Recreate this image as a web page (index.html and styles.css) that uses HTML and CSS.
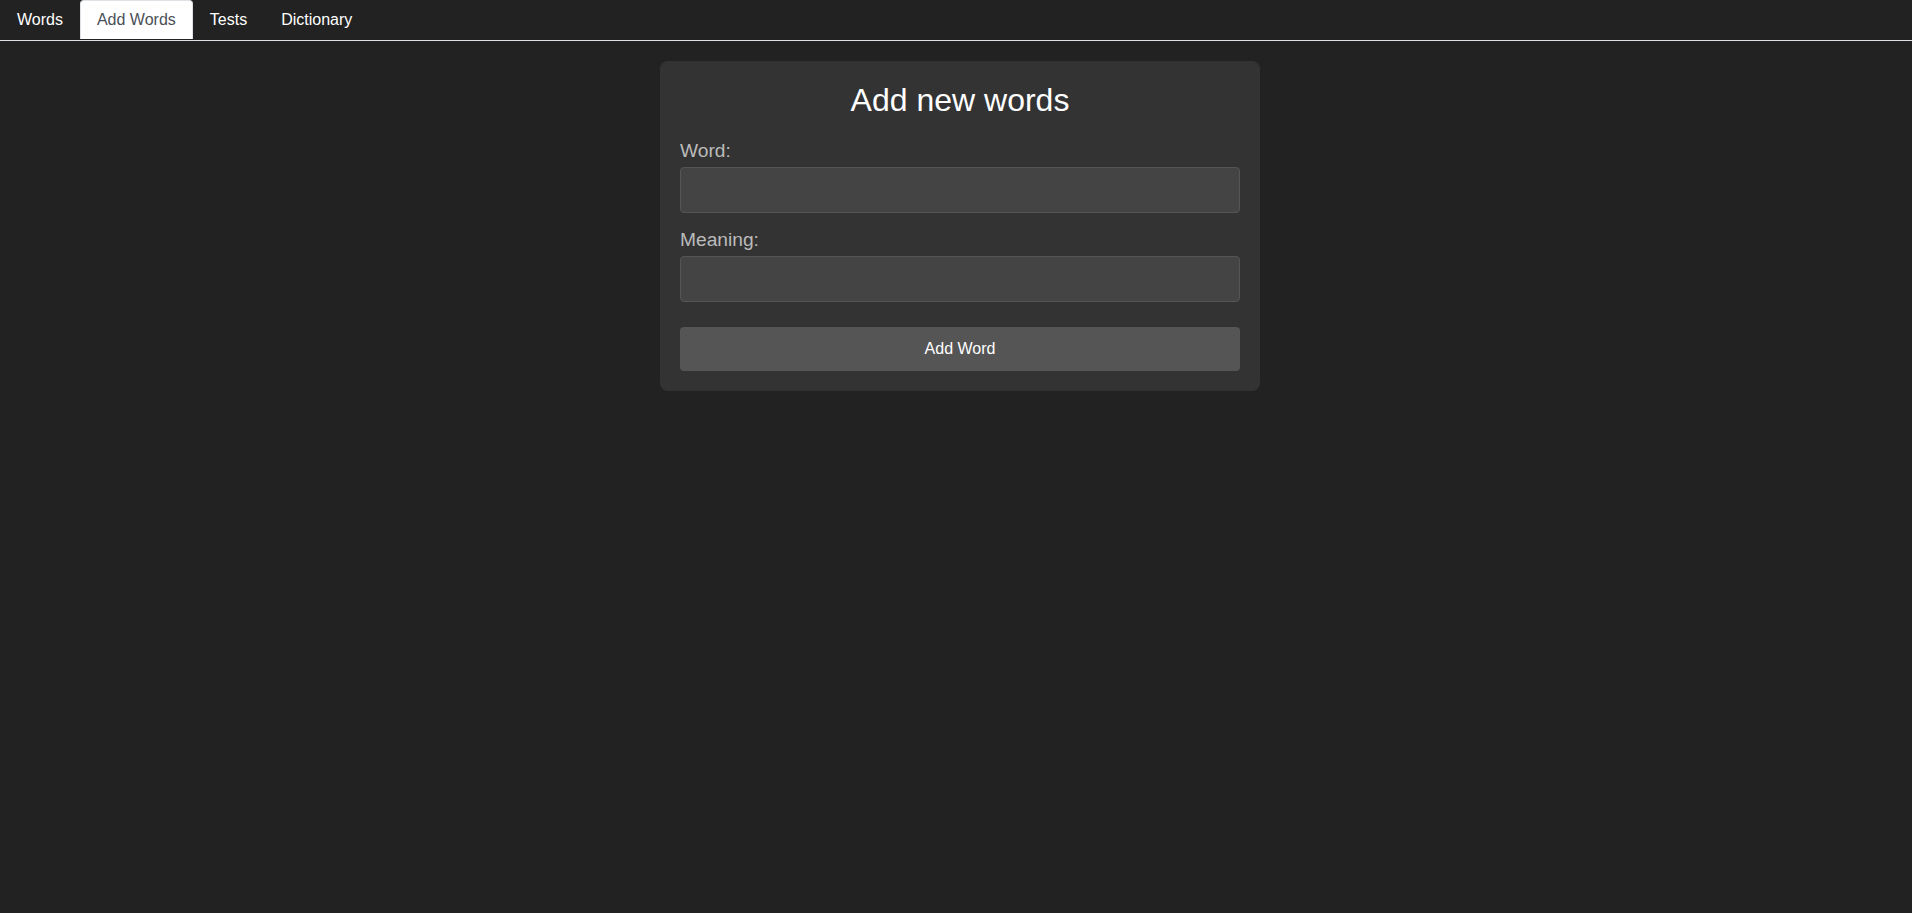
FILE: index.html
```html
<!DOCTYPE html>
<html lang="en">
<head>
<meta charset="utf-8">
<title>Add Words</title>
<link rel="stylesheet" href="styles.css">
</head>
<body>
<nav class="tabs">
  <a class="tab" href="#">Words</a>
  <a class="tab active" href="#">Add Words</a>
  <a class="tab" href="#">Tests</a>
  <a class="tab" href="#">Dictionary</a>
</nav>
<main class="main">
  <section class="card">
    <h1 class="title">Add new words</h1>
    <div class="group">
      <label class="label" for="word">Word:</label>
      <input class="input" id="word" type="text">
    </div>
    <div class="group">
      <label class="label" for="meaning">Meaning:</label>
      <input class="input" id="meaning" type="text">
    </div>
    <button class="btn" type="button">Add Word</button>
  </section>
</main>
</body>
</html>
```

FILE: styles.css
```css
html, body {
  margin: 0;
  padding: 0;
  background: #222222;
  font-family: "Liberation Sans", Arial, sans-serif;
  color: #ffffff;
  min-height: 100%;
}

.tabs {
  display: flex;
  padding-bottom: 1px;
  border-bottom: 1px solid #dee2e6;
}

.tab {
  display: block;
  box-sizing: border-box;
  height: 39px;
  padding: 7px 16px 0;
  border: 1px solid transparent;
  border-bottom: none;
  border-radius: 4px 4px 0 0;
  font-size: 16px;
  line-height: 24px;
  color: #ffffff;
  text-decoration: none;
}

.tab.active {
  background: #ffffff;
  border-color: #dee2e6;
  color: #495057;
}

.main {
  padding: 20px 0 0 8px;
}

.card {
  box-sizing: border-box;
  width: 600px;
  margin: 0 auto;
  padding: 20px;
  background: #333333;
  border-radius: 8px;
}

.title {
  margin: 1px 0 21px;
  font-size: 32px;
  line-height: 37px;
  font-weight: normal;
  text-align: center;
  color: #ffffff;
}

.group {
  margin-bottom: 16px;
}

.label {
  display: block;
  margin-bottom: 5px;
  font-size: 19.2px;
  line-height: 22px;
  color: #bbbbbb;
}

.input {
  display: block;
  box-sizing: border-box;
  width: 100%;
  height: 46px;
  margin: 0;
  padding: 0 12px;
  background: #444444;
  border: 1px solid #555555;
  border-radius: 4px;
  color: #ffffff;
  font-family: "Liberation Sans", Arial, sans-serif;
  font-size: 16px;
  outline: none;
}

.btn {
  display: block;
  box-sizing: border-box;
  width: 100%;
  height: 44px;
  margin: 25px 0 0;
  padding: 0;
  background: #555555;
  border: none;
  border-radius: 4px;
  color: #ffffff;
  font-family: "Liberation Sans", Arial, sans-serif;
  font-size: 16px;
  cursor: pointer;
}
```
